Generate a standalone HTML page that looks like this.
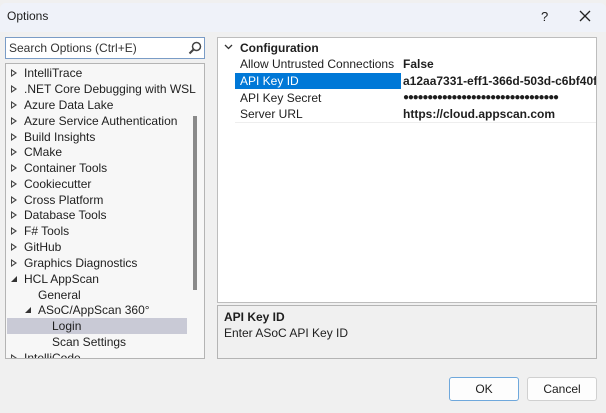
<!DOCTYPE html>
<html><head><meta charset="utf-8"><style>
*{margin:0;padding:0;box-sizing:border-box}
body{width:606px;height:413px;overflow:hidden;background:#f0f0f0;font-family:"Liberation Sans",sans-serif;font-size:12px;color:#1e1e1e;position:relative}
.abs{position:absolute}
.title{left:0;top:3px;width:606px;height:29px;background:#eff2f9;border-top-left-radius:6px;border-top-right-radius:6px}
.tree{left:5px;top:63px;width:200px;height:296px;background:#f7f7f7;border:1px solid #b4b4b4;overflow:hidden}
.row{position:absolute;height:16px;line-height:16px;white-space:nowrap}
.tri{position:absolute;left:5px;top:4px;width:0;height:0;border-top:4px solid transparent;border-bottom:4px solid transparent;border-left:6px solid #444}
.tri i{position:absolute;left:-5px;top:-2.5px;width:0;height:0;border-top:2.5px solid transparent;border-bottom:2.5px solid transparent;border-left:3.5px solid #f7f7f7}
.open{position:absolute;width:0;height:0;border-left:6px solid transparent;border-bottom:6px solid #333}
.grid{left:217px;top:37px;width:380px;height:266px;background:#fff;border:1px solid #bdbdbd;overflow:hidden}
.g{position:absolute;height:16px;line-height:16px;white-space:nowrap}
.desc{left:217px;top:305px;width:380px;height:54px;background:#f0f0f0;border:1px solid #b4b4b4}
.btn{top:377px;width:70px;height:24px;background:#fdfdfd;border:1px solid #d0d0d0;border-radius:3px;text-align:center;line-height:22px}
</style></head><body>
<div class="abs title"></div>
<div class="abs" style="left:7px;top:9px;font-size:12px">Options</div>
<div class="abs" style="left:541px;top:9px;font-size:13px">?</div>
<svg class="abs" style="left:579px;top:10px" width="12" height="12"><path d="M1 1L11 11M11 1L1 11" stroke="#222" stroke-width="1.3"/></svg>

<div class="abs" style="left:5px;top:37px;width:200px;height:22px;background:#fff;border:1px solid #7a9cc6"></div>
<div class="abs" style="left:9px;top:41px;color:#333">Search Options (Ctrl+E)</div>
<svg class="abs" style="left:188px;top:41px" width="14" height="14"><circle cx="8.5" cy="5.5" r="4" fill="none" stroke="#444" stroke-width="1.5"/><line x1="5.5" y1="8.5" x2="1.5" y2="12.5" stroke="#444" stroke-width="2"/></svg>

<div class="abs tree">
<div class="abs" style="left:187px;top:52px;width:4px;height:174px;background:#8a8a8a"></div>
<div class="row" style="top:1px;left:0"><span class="tri"><i></i></span><span style="margin-left:18px">IntelliTrace</span></div>
<div class="row" style="top:17px;left:0"><span class="tri"><i></i></span><span style="margin-left:18px">.NET Core Debugging with WSL</span></div>
<div class="row" style="top:33px;left:0"><span class="tri"><i></i></span><span style="margin-left:18px">Azure Data Lake</span></div>
<div class="row" style="top:49px;left:0"><span class="tri"><i></i></span><span style="margin-left:18px">Azure Service Authentication</span></div>
<div class="row" style="top:65px;left:0"><span class="tri"><i></i></span><span style="margin-left:18px">Build Insights</span></div>
<div class="row" style="top:80px;left:0"><span class="tri"><i></i></span><span style="margin-left:18px">CMake</span></div>
<div class="row" style="top:96px;left:0"><span class="tri"><i></i></span><span style="margin-left:18px">Container Tools</span></div>
<div class="row" style="top:112px;left:0"><span class="tri"><i></i></span><span style="margin-left:18px">Cookiecutter</span></div>
<div class="row" style="top:128px;left:0"><span class="tri"><i></i></span><span style="margin-left:18px">Cross Platform</span></div>
<div class="row" style="top:143px;left:0"><span class="tri"><i></i></span><span style="margin-left:18px">Database Tools</span></div>
<div class="row" style="top:159px;left:0"><span class="tri"><i></i></span><span style="margin-left:18px">F# Tools</span></div>
<div class="row" style="top:175px;left:0"><span class="tri"><i></i></span><span style="margin-left:18px">GitHub</span></div>
<div class="row" style="top:191px;left:0"><span class="tri"><i></i></span><span style="margin-left:18px">Graphics Diagnostics</span></div>
<div class="row" style="top:207px;left:0"><span class="open" style="left:5px;top:5px"></span><span style="margin-left:18px">HCL AppScan</span></div>
<div class="row" style="top:223px;left:32px">General</div>
<div class="row" style="top:238px;left:0"><span class="open" style="left:19px;top:5px"></span><span style="margin-left:32px">ASoC/AppScan 360°</span></div>
<div class="abs" style="left:1px;top:254px;width:180px;height:16px;background:#c9cad6"></div>
<div class="row" style="top:254px;left:46px">Login</div>
<div class="row" style="top:270px;left:46px">Scan Settings</div>
<div class="row" style="top:286px;left:0"><span class="tri"><i></i></span><span style="margin-left:18px">IntelliCode</span></div>
</div>

<div class="abs grid">
<svg class="abs" style="left:6px;top:5px" width="10" height="8"><polyline points="1,2 4.5,5.5 8,2" fill="none" stroke="#333" stroke-width="1.3"/></svg>
<div class="g" style="left:22px;top:2px;font-weight:bold">Configuration</div>
<div class="g" style="left:22px;top:18px">Allow Untrusted Connections</div>
<div class="g" style="left:185px;top:18px;font-weight:bold">False</div>
<div class="abs" style="left:17px;top:35px;width:166px;height:16px;background:#0078d7"></div>
<div class="g" style="left:22px;top:35px;color:#fff">API Key ID</div>
<div class="g" style="left:185px;top:35px;font-weight:bold">a12aa7331-eff1-366d-503d-c6bf40f74</div>
<div class="g" style="left:185px;top:52px;font-weight:bold;font-size:10px;letter-spacing:-1.2px">●●●●●●●●●●●●●●●●●●●●●●●●●●●●●●●●</div>
<div class="g" style="left:22px;top:52px">API Key Secret</div>
<div class="g" style="left:22px;top:68px">Server URL</div>
<div class="g" style="left:185px;top:68px;font-weight:bold">https://cloud.appscan.com</div>
<div class="abs" style="left:17px;top:84px;width:362px;height:1px;background:#eee"></div>
</div>

<div class="abs desc">
<div class="abs" style="left:6px;top:4px;font-weight:bold">API Key ID</div>
<div class="abs" style="left:6px;top:20px">Enter ASoC API Key ID</div>
</div>

<div class="abs btn" style="left:449px;border-color:#6fa8dc">OK</div>
<div class="abs btn" style="left:527px">Cancel</div>
</body></html>
